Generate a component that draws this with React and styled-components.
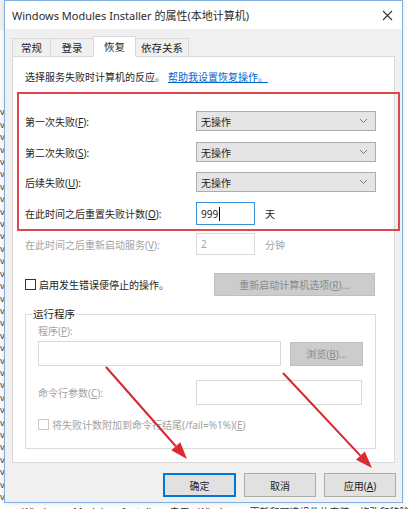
import React from "react";
import styled, { createGlobalStyle } from "styled-components";

const Global = createGlobalStyle`
  html, body { margin: 0; padding: 0; background: #fff; }
  body { font-family: "Noto Sans", "Noto Sans CJK SC", sans-serif; }
`;

const Screen = styled.div`
  position: relative;
  width: 408px;
  height: 509px;
  overflow: hidden;
  background: #fff;
`;

const Desk = styled.div`
  display: flex;
  height: 503px;
`;

// strip of the window behind the dialog, only a sliver of its text shows
const Gutter = styled.div`
  width: 4px;
  overflow: hidden;
  padding-top: 64px;
  font-size: 9px;
  line-height: 12.4px;
  color: #3a3a3a;
  border-top: 30px solid #f4f4f4;
  box-sizing: border-box;
  white-space: pre;
  text-indent: -2px;
`;

const Window = styled.div`
  width: 399px;
  box-sizing: border-box;
  border: 1px solid #82aee0;
  background: #f0f0f0;
  display: flex;
  flex-direction: column;
  box-shadow: 0 0 6px rgba(0, 0, 0, 0.12);
`;

const TitleBar = styled.div`
  height: 28px;
  background: #fff;
  display: flex;
  align-items: center;
  justify-content: space-between;
  padding: 0 9px 0 7px;
  font-size: 11px;
  color: #2b2b2b;
`;

const TabStrip = styled.div`
  display: flex;
  align-items: flex-end;
  height: 22px;
  margin-top: 5px;
  padding-left: 8px;
`;

const Tab = styled.div`
  height: ${p => (p.$active ? 21 : 18)}px;
  padding: 0 ${p => (p.$active ? 7 : 5)}px;
  box-sizing: border-box;
  display: flex;
  align-items: center;
  justify-content: center;
  min-width: ${p => p.$w}px;
  font-size: 10.5px;
  color: #1e1e1e;
  background: ${p => (p.$active ? "#fff" : "#f0f0f0")};
  border: 1px solid #d9d9d9;
  border-bottom: ${p => (p.$active ? "1px solid #fff" : "none")};
  margin-left: -1px;
  margin-bottom: ${p => (p.$active ? -1 : 0)}px;
  position: relative;
  z-index: ${p => (p.$active ? 2 : 1)};
`;

const Panel = styled.div`
  margin: 0 7px;
  height: 407px;
  box-sizing: border-box;
  background: #fff;
  border: 1px solid #d9d9d9;
  padding: 13px 17px 0 12px;
  font-size: 10px;
  color: #1e1e1e;
`;

const Intro = styled.div`
  line-height: 14px;
  a {
    color: #0066cc;
    text-decoration: underline;
    margin-left: 3px;
  }
`;

const FormRow = styled.div`
  display: grid;
  grid-template-columns: 171px auto 1fr;
  align-items: center;
  height: ${p => p.$h}px;
  margin-top: ${p => p.$gap}px;
  color: ${p => (p.$muted ? "#a3a3a3" : "#1e1e1e")};
`;

const Select = styled.div`
  width: 180px;
  height: 20px;
  box-sizing: border-box;
  background: #e5e5e5;
  border: 1px solid #acacac;
  display: flex;
  align-items: center;
  justify-content: space-between;
  padding: 0 7px 0 4px;
  color: #1e1e1e;
`;

const Field = styled.div`
  width: ${p => p.$w}px;
  height: ${p => p.$h}px;
  box-sizing: border-box;
  background: #fff;
  border: 1px solid ${p => (p.$focus ? "#3c8fdc" : p.$muted ? "#d9d9d9" : "#cfcfcf")};
  display: flex;
  align-items: center;
  padding-left: 4px;
  color: ${p => (p.$muted ? "#a3a3a3" : "#1e1e1e")};
`;

const Caret = styled.span`
  width: 1px;
  height: 14px;
  background: #000;
  margin-left: 1px;
`;

const Unit = styled.span`
  margin-left: 10px;
`;

const CheckRow = styled.div`
  display: flex;
  align-items: center;
  justify-content: space-between;
  margin-top: 18px;
  width: 350px;
  height: 23px;
`;

const Check = styled.label`
  display: flex;
  align-items: center;
  gap: 3px;
  margin-top: ${p => p.$gap || 0}px;
  color: ${p => (p.$muted ? "#a3a3a3" : "#1e1e1e")};
`;

const Box = styled.span`
  width: 11px;
  height: 11px;
  box-sizing: border-box;
  border: 1px solid ${p => (p.$muted ? "#c8c8c8" : "#333")};
  background: #fff;
`;

const Button = styled.div`
  width: ${p => p.$w}px;
  height: ${p => p.$h || 24}px;
  box-sizing: border-box;
  display: flex;
  align-items: center;
  justify-content: center;
  font-size: 10px;
  background: ${p => (p.$off ? "#cccccc" : "#e1e1e1")};
  border: 1px solid ${p => (p.$off ? "#bfbfbf" : p.$primary ? "#0078d7" : "#adadad")};
  box-shadow: ${p => (p.$primary ? "inset 0 0 0 1px #0078d7" : "none")};
  color: ${p => (p.$off ? "#8a8a8a" : "#1e1e1e")};
`;

const Group = styled.fieldset`
  margin: 11px 0 0;
  width: 351px;
  height: 142px;
  box-sizing: border-box;
  border: 1px solid #dcdcdc;
  padding: 0 12px 0 12px;
  legend {
    margin-left: -6px;
    padding: 0 1px;
    line-height: 14px;
    font-size: 10.5px;
    color: #1e1e1e;
  }
`;

const Muted = styled.div`
  color: #a3a3a3;
  line-height: 14px;
  margin-top: ${p => p.$gap}px;
`;

const ProgramRow = styled.div`
  display: flex;
  align-items: center;
  gap: 9px;
  margin-top: 3px;
`;

const ArgsRow = styled.div`
  display: grid;
  grid-template-columns: 158px auto;
  align-items: center;
  margin-top: 14px;
  color: #a3a3a3;
`;

const Footer = styled.div`
  display: flex;
  justify-content: flex-end;
  gap: 8px;
  padding: 10px 6px 0 0;
`;

const BackText = styled.div`
  padding: 3px 0 0 22px;
  font-size: 10px;
  line-height: 12px;
  color: #333;
  white-space: nowrap;
  word-spacing: 6px;
`;

const Mark = styled.div`
  position: absolute;
  left: 17px;
  top: 92px;
  width: 383px;
  height: 139px;
  box-sizing: border-box;
  border: 2px solid #e0464e;
  pointer-events: none;
`;

const Arrows = styled.svg`
  position: absolute;
  left: 0;
  top: 0;
  pointer-events: none;
`;

const Chevron = () => (
  <svg width="9" height="6" viewBox="0 0 9 6">
    <path d="M1 1 L4.5 4.5 L8 1" fill="none" stroke="#777" strokeWidth="1" />
  </svg>
);

const Close = () => (
  <svg width="11" height="11" viewBox="0 0 11 11">
    <path d="M1 1 L10 10 M10 1 L1 10" stroke="#333" strokeWidth="1.1" />
  </svg>
);

const tabs = [
  { label: "常规", w: 39 },
  { label: "登录", w: 44 },
  { label: "恢复", w: 43, active: true },
  { label: "依存关系", w: 48 },
];

const failures = [
  { label: "第一次失败", key: "F", gap: 27 },
  { label: "第二次失败", key: "S", gap: 11 },
  { label: "后续失败", key: "U", gap: 10 },
];

const gutterText = ["i", ...Array.from({ length: 32 }, () => "v")].join("\n");

const Arrow = ({ x1, y1, x2, y2 }) => {
  const a = Math.atan2(y2 - y1, x2 - x1);
  const len = 17;
  const half = 6;
  const bx = x2 - len * Math.cos(a);
  const by = y2 - len * Math.sin(a);
  const px = -Math.sin(a) * half;
  const py = Math.cos(a) * half;
  return (
    <g>
      <line x1={x1} y1={y1} x2={bx} y2={by} stroke="#d8262f" strokeWidth="2" />
      <polygon
        points={`${x2},${y2} ${bx + px},${by + py} ${bx - px},${by - py}`}
        fill="#dc2a30"
      />
    </g>
  );
};

export default function App() {
  return (
    <Screen>
      <Global />
      <Desk>
        <Gutter>{gutterText}</Gutter>
        <Window>
          <TitleBar>
            <span>Windows Modules Installer 的属性(本地计算机)</span>
            <Close />
          </TitleBar>
          <TabStrip>
            {tabs.map(t => (
              <Tab key={t.label} $active={t.active} $w={t.w}>
                {t.label}
              </Tab>
            ))}
          </TabStrip>
          <Panel>
            <Intro>
              选择服务失败时计算机的反应。
              <a href="#">帮助我设置恢复操作。</a>
            </Intro>

            {failures.map(f => (
              <FormRow key={f.key} $h={20} $gap={f.gap}>
                <span>
                  {f.label}(<u>{f.key}</u>):
                </span>
                <Select>
                  <span>无操作</span>
                  <Chevron />
                </Select>
              </FormRow>
            ))}

            <FormRow $h={23} $gap={10}>
              <span>
                在此时间之后重置失败计数(<u>O</u>):
              </span>
              <Field $w={59} $h={23} $focus>
                999
                <Caret />
              </Field>
              <Unit>天</Unit>
            </FormRow>

            <FormRow $h={22} $gap={8} $muted>
              <span>
                在此时间之后重新启动服务(<u>V</u>):
              </span>
              <Field $w={59} $h={22} $muted>
                2
              </Field>
              <Unit>分钟</Unit>
            </FormRow>

            <CheckRow>
              <Check>
                <Box />
                <span>启用发生错误便停止的操作。</span>
              </Check>
              <Button $w={161} $h={23} $off>
                <span>
                  重新启动计算机选项(<u>R</u>)...
                </span>
              </Button>
            </CheckRow>

            <Group>
              <legend>运行程序</legend>
              <Muted $gap={3}>
                程序(<u>P</u>):
              </Muted>
              <ProgramRow>
                <Field $w={243} $h={25} $muted />
                <Button $w={73} $h={24} $off>
                  <span>
                    浏览(<u>B</u>)...
                  </span>
                </Button>
              </ProgramRow>
              <ArgsRow>
                <span>
                  命令行参数(<u>C</u>):
                </span>
                <Field $w={166} $h={25} $muted />
              </ArgsRow>
              <Check $muted $gap={12}>
                <Box $muted />
                <span>
                  将失败计数附加到命令行结尾(/fail=%1%)(<u>E</u>)
                </span>
              </Check>
            </Group>
          </Panel>
          <Footer>
            <Button $w={73} $primary>
              确定
            </Button>
            <Button $w={72}>取消</Button>
            <Button $w={72}>
              <span>
                应用(<u>A</u>)
              </span>
            </Button>
          </Footer>
        </Window>
      </Desk>
      <BackText>
        Windows Modules Installer 启用 Windows 更新和可选组件的安装、修改和移除。 手动 本地系统
      </BackText>

      <Mark />
      <Arrows width="408" height="509" viewBox="0 0 408 509">
        <Arrow x1={106} y1={367} x2={187} y2={459} />
        <Arrow x1={283} y1={373} x2={372} y2={468} />
      </Arrows>
    </Screen>
  );
}
